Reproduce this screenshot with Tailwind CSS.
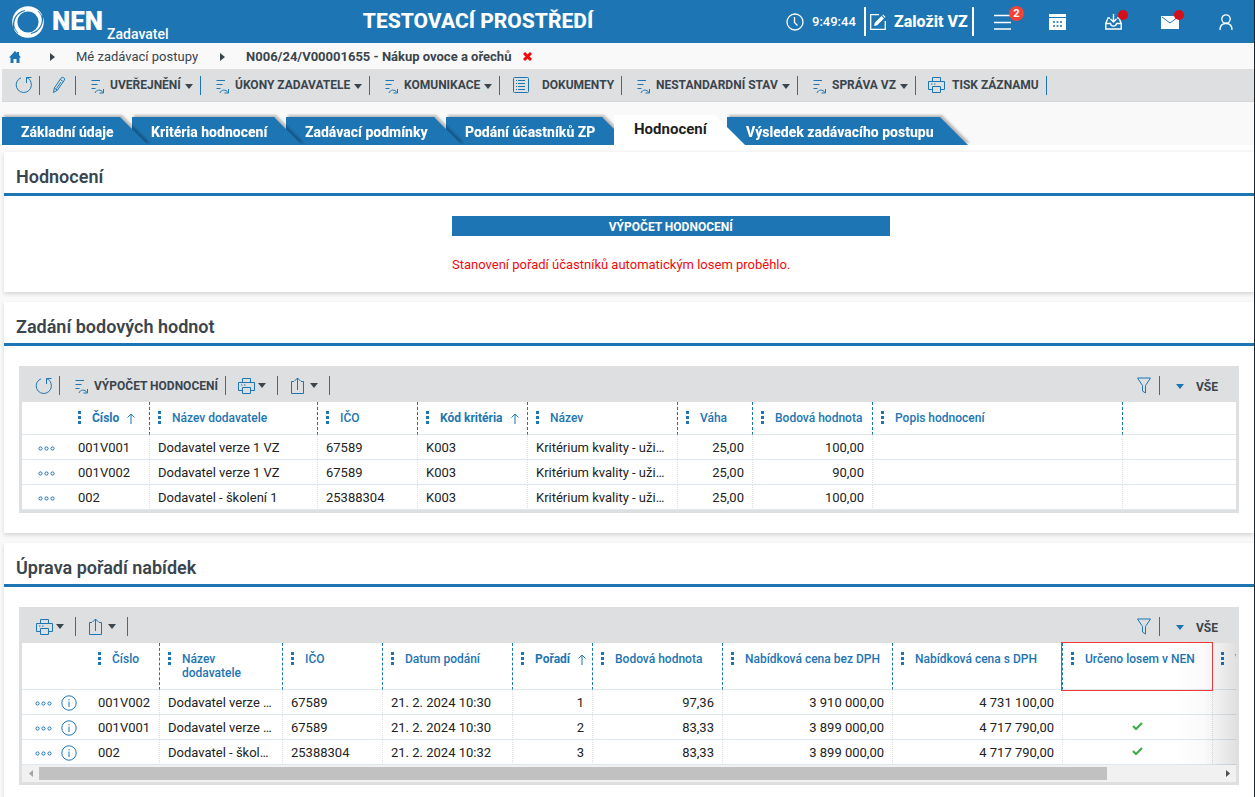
<!DOCTYPE html>
<html lang="cs">
<head>
    <meta charset="UTF-8">
    <meta name="viewport" content="width=device-width, initial-scale=1.0">
    <title>NEN - Hodnocení</title>
    <script src="https://cdn.jsdelivr.net/npm/@tailwindcss/browser@4"></script>
</head>
<body class="min-h-screen overflow-x-hidden border-r border-[#1f262b] bg-[#f9f9f9] font-['Roboto',sans-serif] text-[13px] text-[#3a454d]">
    <!-- Icon sprite -->
    <svg class="hidden" xmlns="http://www.w3.org/2000/svg">
        <symbol id="i-refresh" viewBox="0 0 18 18"><path d="M6 1.800A7.600 7.600 0 1 0 16 6.500M16.500 1.500h-5V7M11.500 1.500c2.500 1 4 2.800 4.500 5" fill="none" stroke="currentColor"/></symbol>
        <symbol id="i-pencil" viewBox="0 0 14 18"><path d="M1.500 16.500l.8-4.500L9 2.200a1.900 1.900 0 0 1 2.700-.5 1.900 1.900 0 0 1 .5 2.700L5.400 14.200zM2.300 12l3.100 2.200M8.200 3.400l3.100 2.200M9 6L4.500 12.500" fill="none" stroke="currentColor"/></symbol>
        <symbol id="i-process" viewBox="0 0 14 15"><path d="M.5 1.500h8.500M.5 5.500h6M.5 9.500h4M4 14c1-3.500 6-4 8-.5M12.500 10v4H8.500" fill="none" stroke="currentColor"/></symbol>
        <symbol id="i-doc" viewBox="0 0 18 18"><rect x="1.500" y="1.500" width="15" height="15" rx="1" fill="none" stroke="currentColor"/><path d="M4 4.500h1M6 4.500h7M4 7.500h1M6 7.500h7M4 10.500h1M6 10.500h7M4 13.500h1M6 13.500h7" stroke="currentColor"/></symbol>
        <symbol id="i-print" viewBox="0 0 18 18"><path d="M4.500 5.500v-4h8v4M4.500 13.500h-4v-8h16v8h-4M4.500 10.500h8v6h-8zM3 8h1.500M6 8h1.500" fill="none" stroke="currentColor"/></symbol>
        <symbol id="i-export" viewBox="0 0 16 18"><path d="M4 4.500H1.500v12h12v-12H11M7.500 13V1M4.500 4l3-3 3 3" fill="none" stroke="currentColor"/></symbol>
        <symbol id="i-funnel" viewBox="0 0 16 17"><path d="M1.500 1h13l-5 7.500v7.500l-3-2V8.500z" fill="none" stroke="currentColor"/></symbol>
        <symbol id="i-caret" viewBox="0 0 8 5"><path d="M0 0h8L4 5z" fill="currentColor"/></symbol>
        <symbol id="i-crumb" viewBox="0 0 5 8"><path d="M0 0v8l5-4z" fill="currentColor"/></symbol>
        <symbol id="i-dots" viewBox="0 0 3 13"><path d="M0 0h3v3H0zM0 5h3v3H0zM0 10h3v3H0z" fill="currentColor"/></symbol>
        <symbol id="i-up" viewBox="0 0 8 11"><path d="M4 11V1M.5 4.500L4 1l3.500 3.500" fill="none" stroke="currentColor"/></symbol>
        <symbol id="i-more" viewBox="0 0 17 5"><g fill="none" stroke="currentColor"><circle cx="2.500" cy="2.500" r="1.600"/><circle cx="8.500" cy="2.500" r="1.600"/><circle cx="14.500" cy="2.500" r="1.600"/></g></symbol>
        <symbol id="i-info" viewBox="0 0 16 16"><circle cx="8" cy="8" r="7.200" fill="none" stroke="currentColor"/><path d="M8 6.500V12M8 4v1.300" stroke="currentColor"/></symbol>
        <symbol id="i-check" viewBox="0 0 11 9"><path d="M1 4l3 3L10 1" fill="none" stroke="#3fae49" stroke-width="2.200"/></symbol>
    </svg>

    <!-- Header -->
    <header class="flex h-[43px] items-center bg-[#1d75b3] text-white">
        <div class="flex h-full w-[170px] shrink-0 items-center pl-3">
            <svg class="size-8 shrink-0" viewBox="0 0 32 32">
                <circle cx="16" cy="16" r="13.200" fill="none" stroke="#fff" stroke-width="5.200"/>
                <path d="M2 23.500C0 15 4 6.500 13 4.500M30 8.500C32 17 28 25.500 19 27.500" fill="none" stroke="#1d75b3" stroke-width="1.200"/>
                <path d="M6 27C3.500 24.500 1.500 21 1.500 17M26 5c2.500 2.500 4.500 6 4.500 10" fill="none" stroke="#1d75b3" stroke-width=".8"/>
            </svg>
            <span class="ml-2 text-[26px] font-black">NEN</span>
            <span class="ml-1 self-end text-sm leading-[18px] font-medium">Zadavatel</span>
        </div>
        <h1 class="flex-1 text-center text-[21px] font-extrabold">TESTOVACÍ PROSTŘEDÍ</h1>
        <div class="flex items-center">
            <svg class="size-[18px]" viewBox="0 0 18 18"><circle cx="9" cy="9" r="8" fill="none" stroke="#fff" stroke-width="1.300"/><path d="M8.500 4v5.500l3 3" fill="none" stroke="#fff" stroke-width="1.300"/></svg>
            <time class="ml-2 w-[52px] text-[13px] font-medium">9:49:44</time>
            <button class="flex h-[29px] w-[110px] items-center gap-2 border-x-2 border-white pl-1 text-base font-extrabold whitespace-nowrap">
                <svg class="size-4 shrink-0" viewBox="0 0 16 16"><path d="M9 .7H.7v14.600h14.600V7" fill="none" stroke="#fff" stroke-width="1.300"/><path d="M4 12l.8-3.200L11.500 2l2.400 2.400-6.700 6.800zM12.300 1.300l.8-.8 2.400 2.400-.8.8z" fill="#fff"/></svg>
                Založit VZ
            </button>
        </div>
        <nav class="flex items-center">
            <button class="relative flex w-14 justify-center" aria-label="Menu">
                <svg class="h-4 w-[17px]" viewBox="0 0 17 16"><path d="M0 1.500h17M0 8.500h17M0 15h17" stroke="#fff" stroke-width="1.500"/></svg>
                <span class="absolute -top-2 right-1.5 size-[15px] rounded-full bg-[#f44336] text-center text-[11px] leading-[15px] font-bold">2</span>
            </button>
            <button class="flex w-14 justify-center" aria-label="Kalendář">
                <svg class="h-4 w-[18px]" viewBox="0 0 18 16"><path d="M0 0h17v3H0zM0 4h17v12H0z" fill="#fff"/><path d="M4 8h2M7.500 8h2M11 8h2M4 12h2M7.500 12h2M11 12h2" stroke="#1d75b3" stroke-width="1.500"/></svg>
            </button>
            <button class="relative flex w-14 justify-center" aria-label="Doručené">
                <svg class="h-4 w-[18px]" viewBox="0 0 18 16"><path d="M5 4H3L.8 9.500V15h15.400V9.500L14 4h-2M.8 9.500h4.700c.5 3.500 5.500 3.500 6 0h4.700M8.500 0v7.500M5.500 5l3 3 3-3" fill="none" stroke="#fff" stroke-width="1.400"/></svg>
                <span class="absolute -top-1 right-3.5 size-2.5 rounded-full bg-[#d50f17]"></span>
            </button>
            <button class="relative flex w-14 justify-center" aria-label="Zprávy">
                <svg class="h-4 w-[18px]" viewBox="0 0 18 16"><path d="M0 2h18v13H0z" fill="#fff"/><path d="M1 3l8 6 8-6" fill="none" stroke="#1d75b3"/></svg>
                <span class="absolute -top-1 right-3.5 size-2.5 rounded-full bg-[#d50f17]"></span>
            </button>
            <button class="flex w-14 justify-center" aria-label="Uživatel">
                <svg class="h-4 w-[14px]" viewBox="0 0 14 16"><circle cx="7" cy="5" r="4.200" fill="none" stroke="#fff" stroke-width="1.300"/><path d="M1 16c0-4 2-6.500 6-6.500s6 2.500 6 6.500" fill="none" stroke="#fff" stroke-width="1.300"/></svg>
            </button>
        </nav>
    </header>

    <!-- Breadcrumb -->
    <nav class="flex h-[26px] items-center pt-px pl-[9px] text-[13px] whitespace-nowrap">
        <a href="#" aria-label="Domů" class="text-[#1d75b3]"><svg class="size-3" viewBox="0 0 12 12"><path d="M6 0l2 2V1h2v3l2 2.500h-1.500V12H7.500V8h-3v4H1.500V6.500H0z" fill="currentColor"/></svg></a>
        <svg class="ml-[29px] h-2 w-[5px]"><use href="#i-crumb"/></svg>
        <a href="#" class="ml-[21px]">Mé zadávací postupy</a>
        <svg class="ml-[22px] h-2 w-[5px]"><use href="#i-crumb"/></svg>
        <a href="#" class="ml-[21px] font-bold">N006/24/V00001655 - Nákup ovoce a ořechů</a>
        <button class="ml-3" aria-label="Zavřít"><svg class="size-[9px]" viewBox="0 0 9 9"><path d="M1 1l7 7M8 1L1 8" stroke="#f00a0a" stroke-width="3"/></svg></button>
    </nav>

    <!-- Toolbar -->
    <div class="ml-0.5 flex h-[33px] items-center border-b border-[#d6d7d9] bg-[#dedfe1] text-xs font-bold whitespace-nowrap [&>button]:flex [&>button]:h-[19px] [&>button]:items-center [&>button]:border-r [&>button]:border-[#1d75b3]">
        <button class="w-[38px] pl-[13px] text-[#1d75b3]" aria-label="Obnovit"><svg class="size-[18px]"><use href="#i-refresh"/></svg></button>
        <button class="w-9 pl-3 text-[#1d75b3]" aria-label="Upravit"><svg class="h-[18px] w-[14px]"><use href="#i-pencil"/></svg></button>
        <button class="w-[125px] pl-[15px]"><svg class="mt-0.5 mr-[5px] h-[15px] w-[14px] text-[#1d75b3]"><use href="#i-process"/></svg>UVEŘEJNĚNÍ<svg class="mt-0.5 ml-1 h-[5px] w-2"><use href="#i-caret"/></svg></button>
        <button class="w-[169px] pl-[15px]"><svg class="mt-0.5 mr-[5px] h-[15px] w-[14px] text-[#1d75b3]"><use href="#i-process"/></svg>ÚKONY ZADAVATELE<svg class="mt-0.5 ml-1 h-[5px] w-2"><use href="#i-caret"/></svg></button>
        <button class="w-[130px] pl-[15px]"><svg class="mt-0.5 mr-[5px] h-[15px] w-[14px] text-[#1d75b3]"><use href="#i-process"/></svg>KOMUNIKACE<svg class="mt-0.5 ml-1 h-[5px] w-2"><use href="#i-caret"/></svg></button>
        <button class="w-[122px] pl-3"><svg class="mr-3 size-[18px] text-[#1d75b3]"><use href="#i-doc"/></svg>DOKUMENTY</button>
        <button class="w-[176px] pl-[15px]"><svg class="mt-0.5 mr-[5px] h-[15px] w-[14px] text-[#1d75b3]"><use href="#i-process"/></svg>NESTANDARDNÍ STAV<svg class="mt-0.5 ml-1 h-[5px] w-2"><use href="#i-caret"/></svg></button>
        <button class="w-[118px] pl-[15px]"><svg class="mt-0.5 mr-[5px] h-[15px] w-[14px] text-[#1d75b3]"><use href="#i-process"/></svg>SPRÁVA VZ<svg class="mt-0.5 ml-1 h-[5px] w-2"><use href="#i-caret"/></svg></button>
        <button class="w-[131px] pl-3"><svg class="mr-1.5 size-[18px] text-[#1d75b3]"><use href="#i-print"/></svg>TISK ZÁZNAMU</button>
    </div>

    <!-- Tabs -->
    <div class="mt-[13px] ml-0.5 flex items-end text-sm font-extrabold whitespace-nowrap text-white">
        <div class="relative z-50 drop-shadow-[2px_-2px_1px_#00000040]"><button class="h-7 w-[146px] bg-[#1d75b3] pt-0.5 pl-[19px] text-left [clip-path:polygon(0_0,calc(100%-28px)_0,100%_100%,0_100%)]">Základní údaje</button></div>
        <div class="relative z-40 -ml-4 drop-shadow-[2px_-2px_1px_#00000040]"><button class="h-7 w-[170px] bg-[#1d75b3] pt-0.5 pl-[19px] text-left [clip-path:polygon(0_0,calc(100%-28px)_0,100%_100%,0_100%)]">Kritéria hodnocení</button></div>
        <div class="relative z-30 -ml-4 drop-shadow-[2px_-2px_1px_#00000040]"><button class="h-7 w-[176px] bg-[#1d75b3] pt-0.5 pl-[19px] text-left [clip-path:polygon(0_0,calc(100%-28px)_0,100%_100%,0_100%)]">Zadávací podmínky</button></div>
        <div class="relative z-20 -ml-4 drop-shadow-[2px_-2px_1px_#00000040]"><button class="h-7 w-[184px] bg-[#1d75b3] pt-0.5 pl-[19px] text-left [clip-path:polygon(0_0,calc(100%-28px)_0,100%_100%,0_100%)]">Podání účastníků ZP</button></div>
        <div class="relative z-60 -ml-4"><button class="h-[30px] w-[131px] bg-white pl-5 text-left text-[15px] font-bold text-[#1f1f1f] [clip-path:polygon(0_0,calc(100%-30px)_0,100%_100%,0_100%)]">Hodnocení</button></div>
        <div class="relative z-10 -ml-[18px] drop-shadow-[2px_-2px_1px_#00000040]"><button class="h-7 w-[241px] bg-[#1d75b3] pt-0.5 pl-[19px] text-left [clip-path:polygon(0_0,calc(100%-28px)_0,100%_100%,0_100%)]">Výsledek zadávacího postupu</button></div>
    </div>
    <div class="relative z-60 mb-[2px] h-[5px] bg-white"></div>

    <main class="flex flex-col gap-2.5 pl-1">
        <section class="bg-white pb-[18px] shadow-[0_2px_4px_#00000026]">
            <h2 class="h-11 border-b-3 border-[#1d75b3] pt-[9px] pl-3 text-lg leading-8 font-semibold">Hodnocení</h2>
            <div class="mt-5 ml-[448px] w-[35%]">
                <button class="block h-5 w-full bg-[#1d75b3] pt-px text-xs font-bold text-white">VÝPOČET HODNOCENÍ</button>
                <p class="mt-5 leading-[18px] whitespace-nowrap text-[#f00a0a]">Stanovení pořadí účastníků automatickým losem proběhlo.</p>
            </div>
        </section>

        <section class="bg-white pb-5 shadow-[0_2px_4px_#00000026]">
            <h2 class="h-11 border-b-3 border-[#1d75b3] pt-[9px] pl-3 text-lg leading-8 font-semibold">Zadání bodových hodnot</h2>
            <div class="mt-5 mr-[15px] ml-[15px] border-3 border-t-0 border-[#dedfe1]">
                <div class="flex h-9 items-center bg-[#dedfe1] pt-[3px] text-xs font-bold whitespace-nowrap [&>button]:flex [&>button]:h-[19px] [&>button]:items-center [&>button]:border-[#1d75b3]">
                    <button class="w-[38px] border-r pl-[13px] text-[#1d75b3]" aria-label="Obnovit"><svg class="size-[18px]"><use href="#i-refresh"/></svg></button>
                    <button class="w-[166px] border-r pl-[15px]"><svg class="mt-0.5 mr-[5px] h-[15px] w-[14px] text-[#1d75b3]"><use href="#i-process"/></svg>VÝPOČET HODNOCENÍ</button>
                    <button class="w-[52px] border-r pl-3" aria-label="Tisk"><svg class="size-[18px] text-[#1d75b3]"><use href="#i-print"/></svg><svg class="ml-0.5 h-[5px] w-2"><use href="#i-caret"/></svg></button>
                    <button class="w-[52px] border-r pl-3" aria-label="Export"><svg class="h-[18px] w-4 text-[#1d75b3]"><use href="#i-export"/></svg><svg class="ml-1 h-[5px] w-2"><use href="#i-caret"/></svg></button>
                    <button class="ml-auto w-6 border-r text-[#1d75b3]" aria-label="Filtr"><svg class="h-[17px] w-4"><use href="#i-funnel"/></svg></button>
                    <button class="w-[76px] pt-0.5 pl-4"><svg class="mr-3 h-[5px] w-2 text-[#1d75b3]"><use href="#i-caret"/></svg>VŠE</button>
                </div>
                <table class="w-full table-fixed border-separate border-spacing-0 bg-white text-[13px] whitespace-nowrap text-[#222] [&_td]:h-[25px] [&_td]:truncate [&_td]:border-r [&_td]:border-b [&_td]:border-r-[#dddddd] [&_td]:border-b-[#dfe8ed] [&_td]:px-2 [&_td]:pt-0.5 [&_td]:[border-right-style:dotted] [&_td:last-child]:border-r-0 [&_th]:h-[33px] [&_th]:border-r [&_th]:border-b [&_th]:border-r-[#1d75b3] [&_th]:border-b-[#dfe8ed] [&_th]:pt-[9px] [&_th]:pl-2 [&_th]:text-left [&_th]:align-top [&_th]:text-xs [&_th]:leading-[14px] [&_th]:font-medium [&_th]:text-[#1d75b3] [&_th]:[border-right-style:dashed] [&_th:first-child]:border-r-0 [&_td:first-child]:border-r-0 [&_th:last-child]:border-r-0">
                    <colgroup><col class="w-12"><col class="w-20"><col class="w-[168px]"><col class="w-[100px]"><col class="w-[110px]"><col class="w-[150px]"><col class="w-[75px]"><col class="w-[120px]"><col class="w-[250px]"><col></colgroup>
                    <thead>
                        <tr>
                            <th></th>
                            <th><div class="flex"><svg class="mr-[11px] h-[13px] w-[3px]"><use href="#i-dots"/></svg><b>Číslo</b><svg class="mt-0.5 ml-2 h-[11px] w-2"><use href="#i-up"/></svg></div></th>
                            <th><div class="flex"><svg class="mr-[11px] h-[13px] w-[3px]"><use href="#i-dots"/></svg>Název dodavatele</div></th>
                            <th><div class="flex"><svg class="mr-[11px] h-[13px] w-[3px]"><use href="#i-dots"/></svg>IČO</div></th>
                            <th><div class="flex"><svg class="mr-[11px] h-[13px] w-[3px]"><use href="#i-dots"/></svg><b>Kód kritéria</b><svg class="mt-0.5 ml-2 h-[11px] w-2"><use href="#i-up"/></svg></div></th>
                            <th><div class="flex"><svg class="mr-[11px] h-[13px] w-[3px]"><use href="#i-dots"/></svg>Název</div></th>
                            <th><div class="flex"><svg class="mr-[11px] h-[13px] w-[3px]"><use href="#i-dots"/></svg>Váha</div></th>
                            <th><div class="flex"><svg class="mr-[11px] h-[13px] w-[3px]"><use href="#i-dots"/></svg>Bodová hodnota</div></th>
                            <th><div class="flex"><svg class="mr-[11px] h-[13px] w-[3px]"><use href="#i-dots"/></svg>Popis hodnocení</div></th>
                            <th></th>
                        </tr>
                    </thead>
                    <tbody>
                        <tr><td><button class="block pl-2 text-[#1d75b3]" aria-label="Akce"><svg class="h-[5px] w-[17px]"><use href="#i-more"/></svg></button></td><td>001V001</td><td>Dodavatel verze 1 VZ</td><td>67589</td><td>K003</td><td>Kritérium kvality - uži…</td><td class="text-right">25,00</td><td class="text-right">100,00</td><td></td><td></td></tr>
                        <tr><td><button class="block pl-2 text-[#1d75b3]" aria-label="Akce"><svg class="h-[5px] w-[17px]"><use href="#i-more"/></svg></button></td><td>001V002</td><td>Dodavatel verze 1 VZ</td><td>67589</td><td>K003</td><td>Kritérium kvality - uži…</td><td class="text-right">25,00</td><td class="text-right">90,00</td><td></td><td></td></tr>
                        <tr><td><button class="block pl-2 text-[#1d75b3]" aria-label="Akce"><svg class="h-[5px] w-[17px]"><use href="#i-more"/></svg></button></td><td>002</td><td>Dodavatel - školení 1</td><td>25388304</td><td>K003</td><td>Kritérium kvality - uži…</td><td class="text-right">25,00</td><td class="text-right">100,00</td><td></td><td></td></tr>
                    </tbody>
                </table>
            </div>
        </section>

        <section class="bg-white pb-5 shadow-[0_2px_4px_#00000026]">
            <h2 class="h-11 border-b-3 border-[#1d75b3] pt-[9px] pl-3 text-lg leading-8 font-semibold">Úprava pořadí nabídek</h2>
            <div class="mt-5 mr-[15px] ml-[15px] border-3 border-t-0 border-[#dedfe1]">
                <div class="flex h-9 items-center bg-[#dedfe1] pt-[3px] text-xs font-bold whitespace-nowrap [&>button]:flex [&>button]:h-[19px] [&>button]:items-center [&>button]:border-[#1d75b3]">
                    <button class="w-[54px] border-r pl-3.5" aria-label="Tisk"><svg class="size-[18px] text-[#1d75b3]"><use href="#i-print"/></svg><svg class="ml-0.5 h-[5px] w-2"><use href="#i-caret"/></svg></button>
                    <button class="w-[52px] border-r pl-3" aria-label="Export"><svg class="h-[18px] w-4 text-[#1d75b3]"><use href="#i-export"/></svg><svg class="ml-1 h-[5px] w-2"><use href="#i-caret"/></svg></button>
                    <button class="ml-auto w-6 border-r text-[#1d75b3]" aria-label="Filtr"><svg class="h-[17px] w-4"><use href="#i-funnel"/></svg></button>
                    <button class="w-[76px] pt-0.5 pl-4"><svg class="mr-3 h-[5px] w-2 text-[#1d75b3]"><use href="#i-caret"/></svg>VŠE</button>
                </div>
                <div class="relative">
                    <div class="overflow-hidden">
                        <table class="w-[1364px] table-fixed border-separate border-spacing-0 bg-white text-[13px] whitespace-nowrap text-[#222] [&_td]:h-[25px] [&_td]:truncate [&_td]:border-r [&_td]:border-b [&_td]:border-r-[#dddddd] [&_td]:border-b-[#dfe8ed] [&_td]:px-2 [&_td]:pt-0.5 [&_td]:[border-right-style:dotted] [&_th]:h-[47px] [&_th]:border-r [&_th]:border-b [&_th]:border-r-[#1d75b3] [&_th]:border-b-[#dfe8ed] [&_th]:pt-[9px] [&_th]:pl-2 [&_th]:text-left [&_th]:align-top [&_th]:text-xs [&_th]:leading-[14px] [&_th]:font-medium [&_th]:text-[#1d75b3] [&_th]:[border-right-style:dashed] [&_th:first-child]:border-r-0 [&_td:first-child]:border-r-0">
                            <colgroup><col class="w-[68px]"><col class="w-[70px]"><col class="w-[123px]"><col class="w-[100px]"><col class="w-[130px]"><col class="w-20"><col class="w-[130px]"><col class="w-[170px]"><col class="w-[170px]"><col class="w-[150px]"><col></colgroup>
                            <thead>
                                <tr>
                                    <th></th>
                                    <th><div class="flex"><svg class="mr-[11px] h-[13px] w-[3px]"><use href="#i-dots"/></svg>Číslo</div></th>
                                    <th><div class="flex"><svg class="mr-[11px] h-[13px] w-[3px] shrink-0"><use href="#i-dots"/></svg><span>Název<br>dodavatele</span></div></th>
                                    <th><div class="flex"><svg class="mr-[11px] h-[13px] w-[3px]"><use href="#i-dots"/></svg>IČO</div></th>
                                    <th><div class="flex"><svg class="mr-[11px] h-[13px] w-[3px]"><use href="#i-dots"/></svg>Datum podání</div></th>
                                    <th><div class="flex"><svg class="mr-[11px] h-[13px] w-[3px]"><use href="#i-dots"/></svg><b>Pořadí</b><svg class="mt-0.5 ml-2 h-[11px] w-2"><use href="#i-up"/></svg></div></th>
                                    <th><div class="flex"><svg class="mr-[11px] h-[13px] w-[3px]"><use href="#i-dots"/></svg>Bodová hodnota</div></th>
                                    <th><div class="flex"><svg class="mr-[11px] h-[13px] w-[3px]"><use href="#i-dots"/></svg>Nabídková cena bez DPH</div></th>
                                    <th><div class="flex"><svg class="mr-[11px] h-[13px] w-[3px]"><use href="#i-dots"/></svg>Nabídková cena s DPH</div></th>
                                    <th><div class="flex"><svg class="mr-[11px] h-[13px] w-[3px]"><use href="#i-dots"/></svg>Určeno losem v NEN</div></th>
                                    <th><div class="flex"><svg class="mr-[11px] h-[13px] w-[3px]"><use href="#i-dots"/></svg>V</div></th>
                                </tr>
                            </thead>
                            <tbody>
                                <tr><td><div class="flex items-center gap-[9px] pl-[5px] text-[#1d75b3]"><button aria-label="Akce"><svg class="h-[5px] w-[17px]"><use href="#i-more"/></svg></button><button aria-label="Detail"><svg class="size-4"><use href="#i-info"/></svg></button></div></td><td class="text-clip!">001V002</td><td>Dodavatel verze …</td><td>67589</td><td>21. 2. 2024 10:30</td><td class="text-right">1</td><td class="text-right">97,36</td><td class="text-right">3 910 000,00</td><td class="text-right">4 731 100,00</td><td></td><td></td></tr>
                                <tr><td><div class="flex items-center gap-[9px] pl-[5px] text-[#1d75b3]"><button aria-label="Akce"><svg class="h-[5px] w-[17px]"><use href="#i-more"/></svg></button><button aria-label="Detail"><svg class="size-4"><use href="#i-info"/></svg></button></div></td><td class="text-clip!">001V001</td><td>Dodavatel verze …</td><td>67589</td><td>21. 2. 2024 10:30</td><td class="text-right">2</td><td class="text-right">83,33</td><td class="text-right">3 899 000,00</td><td class="text-right">4 717 790,00</td><td><svg class="mx-auto mb-1 h-[9px] w-[11px]"><use href="#i-check"/></svg></td><td></td></tr>
                                <tr><td><div class="flex items-center gap-[9px] pl-[5px] text-[#1d75b3]"><button aria-label="Akce"><svg class="h-[5px] w-[17px]"><use href="#i-more"/></svg></button><button aria-label="Detail"><svg class="size-4"><use href="#i-info"/></svg></button></div></td><td class="text-clip!">002</td><td>Dodavatel - škol…</td><td>25388304</td><td>21. 2. 2024 10:32</td><td class="text-right">3</td><td class="text-right">83,33</td><td class="text-right">3 899 000,00</td><td class="text-right">4 717 790,00</td><td><svg class="mx-auto mb-1 h-[9px] w-[11px]"><use href="#i-check"/></svg></td><td></td></tr>
                            </tbody>
                        </table>
                    </div>
                    <div class="pointer-events-none absolute inset-y-0 right-0 w-16 bg-linear-to-r from-transparent via-black/2 to-black/12"></div>
                    <div class="pointer-events-none absolute -top-px left-[1039px] h-[49px] w-[152px] border border-[#f2383f]"></div>
                </div>
                <!-- Horizontal scrollbar -->
                <div class="flex h-[17px] items-center bg-[#f1f1f1]">
                    <span class="flex w-[17px] justify-center"><svg class="h-[7px] w-1" viewBox="0 0 4 7"><path d="M4 0v7L0 3.500z" fill="#a3a3a3"/></svg></span>
                    <div class="h-[13px] flex-1"><div class="h-full w-[90.500%] bg-[#c1c1c1]"></div></div>
                    <span class="flex w-[17px] justify-center"><svg class="h-[7px] w-1" viewBox="0 0 4 7"><path d="M0 0v7l4-3.500z" fill="#505050"/></svg></span>
                </div>
            </div>
        </section>
    </main>
</body>
</html>
